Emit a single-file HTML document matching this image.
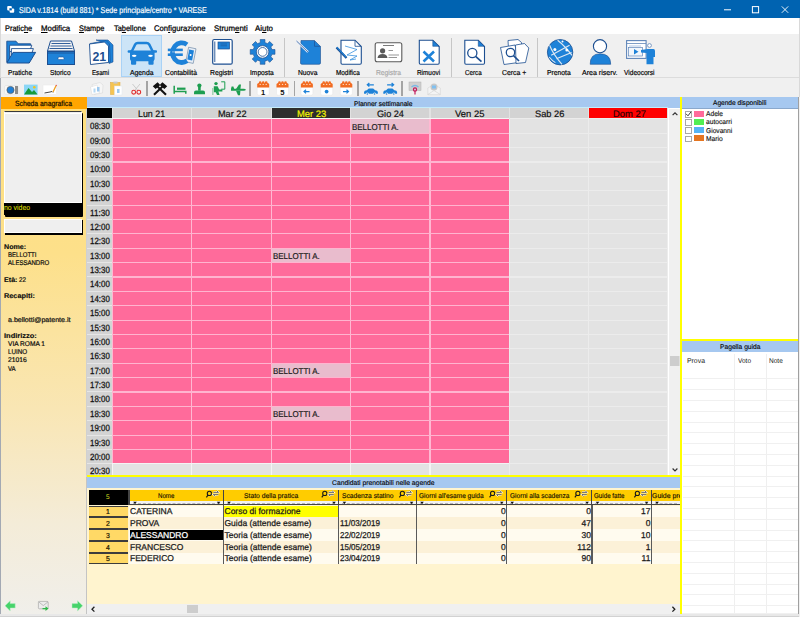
<!DOCTYPE html><html><head><meta charset="utf-8"><style>
html,body{margin:0;padding:0;width:800px;height:617px;overflow:hidden;background:#f0f0f0;font-family:"Liberation Sans", sans-serif;}
#root{position:relative;width:800px;height:617px;overflow:hidden;}
#root div{box-sizing:border-box;text-rendering:geometricPrecision;}
u{text-decoration:underline;text-underline-offset:1px;}
</style></head><body><div id="root">
<div style="position:absolute;left:0.00px;top:0.00px;width:800.00px;height:17.70px;background:#0063b1;"></div>
<div style="position:absolute;left:19.10px;top:6.00px;font-size:8.4px;line-height:1;color:#fff;white-space:nowrap;transform-origin:0 0;transform:scaleX(0.8524);-webkit-text-stroke:0.168px currentColor;">SIDA v.1814 (build 881) * Sede principale/centro * VARESE</div>
<svg style="position:absolute;left:0;top:0" width="800" height="18" viewBox="0 0 800 18"><rect x="7.2" y="6" width="4.6" height="4.4" rx="1" fill="#fff"/><rect x="9.6" y="8.4" width="4.6" height="4.4" rx="1" fill="#fff"/><rect x="9.4" y="8.2" width="2.4" height="2.2" fill="#0063b1"/><line x1="724" y1="9.8" x2="731" y2="9.8" stroke="#fff" stroke-width="1"/><rect x="752.4" y="6.6" width="6.2" height="6.2" fill="none" stroke="#fff" stroke-width="1"/><line x1="781.8" y1="6.4" x2="788.2" y2="12.8" stroke="#fff" stroke-width="0.9"/><line x1="788.2" y1="6.4" x2="781.8" y2="12.8" stroke="#fff" stroke-width="0.9"/></svg>
<div style="position:absolute;left:0.00px;top:17.70px;width:800.00px;height:16.20px;background:#fff;"></div>
<div style="position:absolute;left:5.00px;top:25.00px;font-size:8.1px;line-height:1;color:#000;white-space:nowrap;transform-origin:0 0;transform:scaleX(0.9156);-webkit-text-stroke:0.243px currentColor;">Pratic<u>h</u>e</div>
<div style="position:absolute;left:41.20px;top:25.00px;font-size:8.1px;line-height:1;color:#000;white-space:nowrap;transform-origin:0 0;transform:scaleX(0.9678);-webkit-text-stroke:0.243px currentColor;"><u>M</u>odifica</div>
<div style="position:absolute;left:79.40px;top:25.00px;font-size:8.1px;line-height:1;color:#000;white-space:nowrap;transform-origin:0 0;transform:scaleX(0.9132);-webkit-text-stroke:0.243px currentColor;"><u>S</u>tampe</div>
<div style="position:absolute;left:113.50px;top:25.00px;font-size:8.1px;line-height:1;color:#000;white-space:nowrap;transform-origin:0 0;transform:scaleX(0.9167);-webkit-text-stroke:0.243px currentColor;">Ta<u>b</u>ellone</div>
<div style="position:absolute;left:153.60px;top:25.00px;font-size:8.1px;line-height:1;color:#000;white-space:nowrap;transform-origin:0 0;transform:scaleX(0.9469);-webkit-text-stroke:0.243px currentColor;">Con<u>f</u>igurazione</div>
<div style="position:absolute;left:213.50px;top:25.00px;font-size:8.1px;line-height:1;color:#000;white-space:nowrap;transform-origin:0 0;transform:scaleX(0.9721);-webkit-text-stroke:0.243px currentColor;">Strum<u>e</u>nti</div>
<div style="position:absolute;left:255.40px;top:25.00px;font-size:8.1px;line-height:1;color:#000;white-space:nowrap;transform-origin:0 0;transform:scaleX(0.9747);-webkit-text-stroke:0.243px currentColor;">Ai<u>u</u>to</div>
<div style="position:absolute;left:0.00px;top:33.90px;width:800.00px;height:43.40px;background:#f0f0f0;"></div>
<div style="position:absolute;left:0.00px;top:77.00px;width:800.00px;height:1.20px;background:#dcdcdc;"></div>
<div style="position:absolute;left:121.00px;top:35.10px;width:41.00px;height:42.00px;background:#cce4f7;border:1px solid #a9d2f6;"></div>
<div style="position:absolute;left:7.75px;top:69.00px;font-size:7.2px;line-height:1;color:#000;white-space:nowrap;transform-origin:0 0;transform:scaleX(0.9146);-webkit-text-stroke:0.180px currentColor;">Pratiche</div>
<div style="position:absolute;left:50.00px;top:69.00px;font-size:7.2px;line-height:1;color:#000;white-space:nowrap;transform-origin:0 0;transform:scaleX(0.9192);-webkit-text-stroke:0.180px currentColor;">Storico</div>
<div style="position:absolute;left:91.90px;top:69.00px;font-size:7.2px;line-height:1;color:#000;white-space:nowrap;transform-origin:0 0;transform:scaleX(0.8551);-webkit-text-stroke:0.180px currentColor;">Esami</div>
<div style="position:absolute;left:130.00px;top:69.00px;font-size:7.2px;line-height:1;color:#000;white-space:nowrap;transform-origin:0 0;transform:scaleX(0.9461);-webkit-text-stroke:0.180px currentColor;">Agenda</div>
<div style="position:absolute;left:165.25px;top:69.00px;font-size:7.2px;line-height:1;color:#000;white-space:nowrap;transform-origin:0 0;transform:scaleX(0.9401);-webkit-text-stroke:0.180px currentColor;">Contabilità</div>
<div style="position:absolute;left:210.00px;top:69.00px;font-size:7.2px;line-height:1;color:#000;white-space:nowrap;transform-origin:0 0;transform:scaleX(0.9464);-webkit-text-stroke:0.180px currentColor;">Registri</div>
<div style="position:absolute;left:250.00px;top:69.00px;font-size:7.2px;line-height:1;color:#000;white-space:nowrap;transform-origin:0 0;transform:scaleX(0.9272);-webkit-text-stroke:0.180px currentColor;">Imposta</div>
<div style="position:absolute;left:297.50px;top:69.00px;font-size:7.2px;line-height:1;color:#000;white-space:nowrap;transform-origin:0 0;transform:scaleX(0.9315);-webkit-text-stroke:0.180px currentColor;">Nuova</div>
<div style="position:absolute;left:335.60px;top:69.00px;font-size:7.2px;line-height:1;color:#000;white-space:nowrap;transform-origin:0 0;transform:scaleX(0.8874);-webkit-text-stroke:0.180px currentColor;">Modifica</div>
<div style="position:absolute;left:376.25px;top:69.00px;font-size:7.2px;line-height:1;color:#a8a8a8;white-space:nowrap;transform-origin:0 0;transform:scaleX(0.9321);-webkit-text-stroke:0.180px currentColor;">Registra</div>
<div style="position:absolute;left:416.90px;top:69.00px;font-size:7.2px;line-height:1;color:#000;white-space:nowrap;transform-origin:0 0;transform:scaleX(0.8881);-webkit-text-stroke:0.180px currentColor;">Rimuovi</div>
<div style="position:absolute;left:465.00px;top:69.00px;font-size:7.2px;line-height:1;color:#000;white-space:nowrap;transform-origin:0 0;transform:scaleX(0.8739);-webkit-text-stroke:0.180px currentColor;">Cerca</div>
<div style="position:absolute;left:501.90px;top:69.00px;font-size:7.2px;line-height:1;color:#000;white-space:nowrap;transform-origin:0 0;transform:scaleX(0.9581);-webkit-text-stroke:0.180px currentColor;">Cerca +</div>
<div style="position:absolute;left:546.90px;top:69.00px;font-size:7.2px;line-height:1;color:#000;white-space:nowrap;transform-origin:0 0;transform:scaleX(0.9391);-webkit-text-stroke:0.180px currentColor;">Prenota</div>
<div style="position:absolute;left:581.90px;top:69.00px;font-size:7.2px;line-height:1;color:#000;white-space:nowrap;transform-origin:0 0;transform:scaleX(0.9815);-webkit-text-stroke:0.180px currentColor;">Area riserv.</div>
<div style="position:absolute;left:624.40px;top:69.00px;font-size:7.2px;line-height:1;color:#000;white-space:nowrap;transform-origin:0 0;transform:scaleX(0.9140);-webkit-text-stroke:0.180px currentColor;">Videocorsi</div>
<div style="position:absolute;left:284.40px;top:37.50px;width:1.00px;height:39.00px;background:#c6c6c6;"></div>
<div style="position:absolute;left:450.50px;top:37.50px;width:1.00px;height:39.00px;background:#c6c6c6;"></div>
<div style="position:absolute;left:536.60px;top:37.50px;width:1.00px;height:39.00px;background:#c6c6c6;"></div>
<div style="position:absolute;left:0.00px;top:78.20px;width:800.00px;height:18.30px;background:#f0f0f0;"></div>
<div style="position:absolute;left:146.30px;top:80.50px;width:1.50px;height:15.00px;background:#a4a4a4;"></div>
<div style="position:absolute;left:249.20px;top:80.50px;width:1.50px;height:15.00px;background:#a4a4a4;"></div>
<div style="position:absolute;left:293.55px;top:80.50px;width:1.50px;height:15.00px;background:#a4a4a4;"></div>
<div style="position:absolute;left:357.30px;top:80.50px;width:1.50px;height:15.00px;background:#a4a4a4;"></div>
<div style="position:absolute;left:401.05px;top:80.50px;width:1.50px;height:15.00px;background:#a4a4a4;"></div>
<svg style="position:absolute;left:0;top:0" width="800" height="100" viewBox="0 0 800 100"><path d="M6.8 41.2 H16 L18.2 43.8 H30.6 V47 H9.6 V62 H6.8 Z" fill="#1e82d8" stroke="#1d4f91" stroke-width="0.9"/>
<path d="M9.6 45.2 H31.8 L29.6 51.6 H9.6 Z" fill="#fff" stroke="#1d4f91" stroke-width="0.9"/>
<path d="M11.4 48.6 H33.4 L31.2 55 H11.4 Z" fill="#fff" stroke="#1d4f91" stroke-width="0.9"/>
<path d="M6.8 63 H29.2 L35.6 52.4 H13 Z" fill="#1e82d8" stroke="#1d4f91" stroke-width="1"/>
<path d="M50.5 41 H71.5 L74.5 51 H47.5 Z" fill="#f4f4f4" stroke="#1d4f91" stroke-width="1"/>
<line x1="51.5" y1="43.5" x2="70.5" y2="43.5" stroke="#1d4f91" stroke-width="0.9"/>
<line x1="50.5" y1="46" x2="71.5" y2="46" stroke="#1d4f91" stroke-width="0.9"/>
<line x1="49.5" y1="48.5" x2="72.5" y2="48.5" stroke="#1d4f91" stroke-width="0.9"/>
<rect x="47.5" y="51.5" width="27" height="13" fill="#1e82d8" stroke="#1d4f91" stroke-width="1"/>
<line x1="47.5" y1="53" x2="74.5" y2="53" stroke="#1d4f91" stroke-width="0.8"/>
<rect x="58" y="57" width="6" height="2.6" rx="1.2" fill="#fff" stroke="#1d4f91" stroke-width="0.6"/>
<path d="M96 40 H108 L113 45 V62 L109 63.5 V44 Z" fill="#1e82d8" stroke="#1d4f91" stroke-width="0.6"/>
<path d="M90 43.5 L106 40.5 L109.5 44 L110.5 62 L91.5 64 Z" fill="#1e82d8" stroke="#1d4f91" stroke-width="0.5"/>
<path d="M89.5 44 L104.5 42 L108.5 46 L108.5 62.5 L90.5 64.5 Z" fill="#fff" stroke="#1d4f91" stroke-width="0.9"/>
<text x="99.3" y="61" font-family="Liberation Sans" font-weight="bold" font-size="13" fill="#1d4f91" text-anchor="middle" transform="translate(99.3 0) scale(0.95 1) translate(-99.3 0)">21</text>
<path d="M131.8 51.2 L135.2 44.4 Q136.1 42.9 137.8 42.9 H146.6 Q148.3 42.9 149.2 44.4 L152.6 51.2" fill="none" stroke="#1e82d8" stroke-width="2.5"/>
<path d="M130 50.6 H154.6 V58.6 Q154.6 61.2 152 61.2 H132.6 Q130 61.2 130 58.6 Z" fill="#1e82d8"/>
<rect x="127.6" y="50.2" width="4.4" height="2.6" rx="1" fill="#1e82d8"/><rect x="152.6" y="50.2" width="4.4" height="2.6" rx="1" fill="#1e82d8"/>
<rect x="131" y="59.5" width="5.2" height="5.2" rx="1" fill="#1e82d8"/><rect x="148.4" y="59.5" width="5.2" height="5.2" rx="1" fill="#1e82d8"/>
<ellipse cx="134.2" cy="55.8" rx="2.3" ry="1.15" fill="#fff"/><ellipse cx="150.5" cy="55.8" rx="2.3" ry="1.15" fill="#fff"/>
<path d="M188.6 47.2 L196 48.8 L193.2 63.4 L185.8 61.8 Z" fill="#e8eef6" stroke="#6f8aa8" stroke-width="0.7"/>
<path d="M189.2 49.4 L194 50.4 L192.1 60.6 L187.3 59.6 Z" fill="#1e82d8"/>
<circle cx="190.6" cy="55" r="1" fill="#fff"/>
<path d="M187 44.6 A9.3 9.8 0 1 0 187 60.8" fill="none" stroke="#1e82d8" stroke-width="4.8"/>
<rect x="167.8" y="48.6" width="15" height="2.6" fill="#1e82d8"/><rect x="167.8" y="53.4" width="15" height="2.6" fill="#1e82d8"/>
<line x1="172" y1="51.9" x2="183" y2="51.9" stroke="#d8e6f4" stroke-width="0.6"/>
<rect x="212.7" y="39.5" width="19.5" height="24.7" rx="1.5" fill="#fff" stroke="#1d4f91" stroke-width="1.2"/>
<line x1="214.8" y1="41.5" x2="214.8" y2="62" stroke="#1d4f91" stroke-width="0.9"/>
<rect x="218" y="42" width="11.5" height="7" fill="#1e82d8" stroke="#1d4f91" stroke-width="0.7"/>
<line x1="220.5" y1="44" x2="227" y2="44" stroke="#1d4f91" stroke-width="0.6"/><line x1="220.5" y1="45.8" x2="227" y2="45.8" stroke="#1d4f91" stroke-width="0.6"/>
<polygon points="260.01,42.65 260.32,42.58 260.20,39.53 265.00,39.53 264.88,42.58 265.19,42.65 267.31,43.53 267.58,43.69 269.65,41.45 273.05,44.85 270.81,46.92 270.97,47.19 271.85,49.31 271.92,49.62 274.97,49.50 274.97,54.30 271.92,54.18 271.85,54.49 270.97,56.61 270.81,56.88 273.05,58.95 269.65,62.35 267.58,60.11 267.31,60.27 265.19,61.15 264.88,61.22 265.00,64.27 260.20,64.27 260.32,61.22 260.01,61.15 257.89,60.27 257.62,60.11 255.55,62.35 252.15,58.95 254.39,56.88 254.23,56.61 253.35,54.49 253.28,54.18 250.23,54.30 250.23,49.50 253.28,49.62 253.35,49.31 254.23,47.19 254.39,46.92 252.15,44.85 255.55,41.45 257.62,43.69 257.89,43.53" fill="#1e82d8" stroke="#1d4f91" stroke-width="0.6"/>
<circle cx="262.6" cy="51.9" r="6.3" fill="#fff" stroke="#1d4f91" stroke-width="0.8"/>
<circle cx="262.6" cy="51.9" r="4.4" fill="#fff" stroke="#1d4f91" stroke-width="0.8"/>
<path d="M301 40.5 H314.5 L320.5 46.5 V63 Q320.5 64.3 319 64.3 H302 Q300.5 64.3 300.5 63 Z" fill="#1e82d8" stroke="#1d4f91" stroke-width="0.6"/>
<path d="M314.5 40.8 V46.3 H320.3" fill="none" stroke="#1d4f91" stroke-width="0.7"/>
<line x1="296.5" y1="41" x2="308" y2="52" stroke="#e8eef8" stroke-width="2.4"/>
<line x1="296.5" y1="41" x2="308" y2="52" stroke="#1d4f91" stroke-width="0.7"/>
<path d="M341 40.2 H355 L361.3 46.5 V63 Q361.3 64.2 360 64.2 H342.3 Q341 64.2 341 63 Z" fill="#fff" stroke="#1d4f91" stroke-width="1.1"/>
<path d="M355 40.5 V46.3 H361" fill="none" stroke="#1d4f91" stroke-width="0.8"/>
<path d="M345 46 L357 49.5 L347 55 L357 56 L350 60 L356 59" fill="none" stroke="#1e82d8" stroke-width="0.7"/>
<line x1="336.5" y1="47.5" x2="346.5" y2="58" stroke="#1d4f91" stroke-width="2.3"/>
<line x1="336.8" y1="47.2" x2="346.3" y2="57.3" stroke="#1e82d8" stroke-width="1.1"/>
<rect x="375.2" y="42.8" width="26.6" height="18.9" rx="2" fill="#fff" stroke="#5a5a5a" stroke-width="1.1"/>
<line x1="383" y1="45.5" x2="394" y2="45.5" stroke="#5a5a5a" stroke-width="0.8"/>
<circle cx="382.6" cy="50.8" r="2.6" fill="#5a5a5a"/><path d="M377.5 58 Q378 54 382.6 54 Q387 54 387.5 58 Z" fill="#5a5a5a"/>
<line x1="388.5" y1="50.5" x2="393" y2="50.5" stroke="#6a6a6a" stroke-width="0.7"/><line x1="388.5" y1="55" x2="399" y2="55" stroke="#6a6a6a" stroke-width="0.7"/><line x1="388.5" y1="57.5" x2="397" y2="57.5" stroke="#6a6a6a" stroke-width="0.7"/>
<path d="M419.3 40.2 H432.8 L439.2 46.5 V63 Q439.2 64.2 438 64.2 H420.5 Q419.3 64.2 419.3 63 Z" fill="#fff" stroke="#1d4f91" stroke-width="1.1"/>
<path d="M432.8 40.5 L432.8 46.3 H439 Z" fill="#1e82d8" stroke="#1d4f91" stroke-width="0.6"/>
<path d="M423.5 51.5 L434 61.5 M434 51.5 L423.5 61.5" stroke="#1e82d8" stroke-width="2.6"/>
<path d="M464.8 40.2 H478.3 L484.5 46.5 V63 Q484.5 64.2 483.3 64.2 H466 Q464.8 64.2 464.8 63 Z" fill="#fff" stroke="#1d4f91" stroke-width="1.1"/>
<path d="M478.3 40.5 L478.3 46.3 H484.3 Z" fill="#1e82d8" stroke="#1d4f91" stroke-width="0.6"/>
<circle cx="472.3" cy="53" r="4.6" fill="#fff" stroke="#1d4f91" stroke-width="1.3"/>
<line x1="475.6" y1="56.4" x2="481.5" y2="61.7" stroke="#1d4f91" stroke-width="1.7"/>
<path d="M508 40.5 L518 39.5 L521.5 42.5 L522 56 L509 57.5 Z" fill="#fff" stroke="#1d4f91" stroke-width="0.8"/>
<path d="M500.5 47.5 L515 45 L518.5 62.5 L504 64.5 Z" fill="#fff" stroke="#1d4f91" stroke-width="0.8"/>
<path d="M515.5 45 L524.5 43.5 L528.8 48 L525.5 62.5 L516 63.5 Z" fill="#fff" stroke="#1d4f91" stroke-width="0.8"/>
<circle cx="510.5" cy="52.5" r="4.2" fill="#fff" stroke="#1d4f91" stroke-width="1.3"/>
<line x1="513.5" y1="55.6" x2="519" y2="61" stroke="#1d4f91" stroke-width="1.6"/>
<circle cx="560.1" cy="52.2" r="12.7" fill="#1e82d8" stroke="#1d4f91" stroke-width="0.8"/>
<path d="M549.6 45.2 Q553 54 562 64.4 M557.6 40.2 Q565 46 572 55.4 M569.6 45.2 L551.2 55.2 M571.6 52.4 L556.4 58.8 M549.2 57 Q552 60.6 555.4 62.6" fill="none" stroke="#dfe8f2" stroke-width="1.1"/>
<circle cx="554.9" cy="49.6" r="1.5" fill="#fff"/><circle cx="566.8" cy="50" r="1.5" fill="#fff"/><circle cx="562.5" cy="41.5" r="1" fill="#fff"/>
<circle cx="600" cy="46.2" r="6.6" fill="#fff" stroke="#1d4f91" stroke-width="1.1"/>
<path d="M590.2 64.3 Q590 53.8 600 53.8 Q610.7 53.8 610.7 64.3 Z" fill="#1e82d8" stroke="#1d4f91" stroke-width="0.6"/>
<rect x="626.6" y="40.6" width="19.5" height="17.8" fill="#fff" stroke="#5f85b8" stroke-width="1.1"/>
<line x1="626.6" y1="43.5" x2="646" y2="43.5" stroke="#5f85b8" stroke-width="0.8"/><line x1="629" y1="46" x2="641" y2="46" stroke="#8fb0d8" stroke-width="0.7"/>
<rect x="628.5" y="47.5" width="14" height="8.5" fill="#f2f6fb" stroke="#5f85b8" stroke-width="0.7"/>
<path d="M634 49 L638.5 51.7 L634 54.4 Z" fill="#1e82d8"/>
<circle cx="649.5" cy="45.5" r="1.9" fill="#fff" stroke="#5f85b8" stroke-width="0.8"/>
<path d="M641 50 L648 49 H653.5 Q655 49 655 51 V57 H653.5 V64.3 H646.5 V53 L641 52.5 Z" fill="#1e82d8"/><rect x="4.5" y="85.5" width="13.5" height="8.8" rx="1.5" fill="#f8f8f8" stroke="#dcdcdc" stroke-width="0.5"/>
<rect x="15" y="86" width="3" height="8" fill="#8c8c8c"/>
<circle cx="10.5" cy="90" r="3.6" fill="#1e7fd8" stroke="#5b5b5b" stroke-width="0.7"/>
<rect x="24" y="84.6" width="13.6" height="9.9" fill="#8ad6f6"/>
<path d="M24 94.5 L28.5 88 L32 92 L34 90 L37.6 94.5 Z" fill="#169a3a"/>
<circle cx="34.3" cy="87.3" r="1.3" fill="#f5c21a"/>
<rect x="43" y="85" width="13.5" height="9.5" fill="#fff" stroke="#e8e8e8" stroke-width="0.5"/>
<path d="M44.5 93 L50 92 L52 91.5 L53 92.5" fill="none" stroke="#333" stroke-width="0.9"/>
<line x1="53" y1="92" x2="56" y2="85.8" stroke="#f0a020" stroke-width="1.3"/><circle cx="56.2" cy="85.3" r="0.6" fill="#e02020"/>
<path d="M92 84.5 L100 82.5 L103 85 L102.5 93 L94 94.5 Z" fill="#f6f6f6" stroke="#d5d5d5" stroke-width="0.5"/>
<path d="M90.5 87 L97 85 L99.5 93 L92 94.5 Z" fill="#fff" stroke="#d8d8d8" stroke-width="0.5"/>
<rect x="97" y="87" width="2.5" height="4.5" fill="#9cc8ee"/><rect x="93.5" y="88.5" width="2" height="4" fill="#b6d8f2"/>
<rect x="110.5" y="82.5" width="9.5" height="12" fill="#f5c452" stroke="#e0a838" stroke-width="0.5"/>
<rect x="113.5" y="81.6" width="4" height="2" fill="#c9c9c9"/>
<rect x="114.5" y="86" width="7.5" height="9" fill="#fff" stroke="#dde6ee" stroke-width="0.5"/><rect x="117" y="89" width="2.5" height="4" fill="#9cc8ee"/>
<path d="M132.5 84 L137.5 90 M140 84 L135 90" stroke="#c0c0c0" stroke-width="0.8"/>
<circle cx="133.7" cy="92.2" r="1.9" fill="none" stroke="#e02b2b" stroke-width="1.1"/><circle cx="138.8" cy="92.2" r="1.9" fill="none" stroke="#e02b2b" stroke-width="1.1"/>
<path d="M157.5 86.5 L166 94.8 M162.5 86.5 L154 94.8" stroke="#111" stroke-width="2.1"/>
<path d="M152.8 86.2 L157.6 82.3 L160.3 85 L155.6 88.9 Z M167.2 86.2 L162.4 82.3 L159.7 85 L164.4 88.9 Z" fill="#111"/>
<path d="M174.2 85.8 V93.8 M174.2 91.6 H185.8 V93.8" fill="none" stroke="#1e9e50" stroke-width="1.5"/><rect x="177" y="87.6" width="8.5" height="2.2" fill="#1e9e50"/>
<circle cx="199.4" cy="85.6" r="2.1" fill="#1e9e50"/><rect x="198.1" y="86.5" width="2.6" height="4.2" fill="#1e9e50"/><path d="M194 94.2 V92.3 Q194 90.5 196 90.5 H203 Q205 90.5 205 92.3 V94.2 Z" fill="#1e9e50"/>
<circle cx="216" cy="83.6" r="1.7" fill="#1e9e50"/><path d="M213.8 86.3 H217.6 L219.2 89.6 H222.4 V91.6 H218.4 L219.6 95 H217 L215.8 92.2 H213.8 Z" fill="#1e9e50"/><path d="M221.2 81.8 H224.8 V89.2 H221.2" fill="none" stroke="#1e9e50" stroke-width="1"/><path d="M212.8 88 V95" stroke="#9ed0ae" stroke-width="1.4"/>
<path d="M231 88.8 H243.5 Q245.8 89 245.8 89.8 Q245.8 90.6 243.5 90.8 H231 Z" fill="#1e9e50"/>
<path d="M236 88.9 L239 84.4 H241 L240.4 88.9 Z M236 90.7 L238 95.2 H240 L240.4 90.7 Z M231 89 L231.6 86.6 H233.4 L234.2 89 Z" fill="#1e9e50"/>
<rect x="257.2" y="84" width="12" height="11.2" rx="1.6" fill="#fff" stroke="#e4e4e4" stroke-width="0.5"/><path d="M257.2 87.4 V84.6 Q257.2 83 258.79999999999995 83 H267.59999999999997 Q269.2 83 269.2 84.6 V87.4 Z" fill="#f26b21"/><circle cx="260.2" cy="82.6" r="1.3" fill="#f26b21"/><circle cx="260.2" cy="84.4" r="0.7" fill="#ffd9c0"/><circle cx="263.2" cy="82.6" r="1.3" fill="#f26b21"/><circle cx="263.2" cy="84.4" r="0.7" fill="#ffd9c0"/><circle cx="266.2" cy="82.6" r="1.3" fill="#f26b21"/><circle cx="266.2" cy="84.4" r="0.7" fill="#ffd9c0"/><text x="263.1" y="94.6" font-family="Liberation Sans" font-weight="bold" font-size="7.6" fill="#111" text-anchor="middle">1</text>
<rect x="276.5" y="84" width="12" height="11.2" rx="1.6" fill="#fff" stroke="#e4e4e4" stroke-width="0.5"/><path d="M276.5 87.4 V84.6 Q276.5 83 278.09999999999997 83 H286.9 Q288.5 83 288.5 84.6 V87.4 Z" fill="#f26b21"/><circle cx="279.5" cy="82.6" r="1.3" fill="#f26b21"/><circle cx="279.5" cy="84.4" r="0.7" fill="#ffd9c0"/><circle cx="282.5" cy="82.6" r="1.3" fill="#f26b21"/><circle cx="282.5" cy="84.4" r="0.7" fill="#ffd9c0"/><circle cx="285.5" cy="82.6" r="1.3" fill="#f26b21"/><circle cx="285.5" cy="84.4" r="0.7" fill="#ffd9c0"/><text x="282.4" y="94.6" font-family="Liberation Sans" font-weight="bold" font-size="7.6" fill="#111" text-anchor="middle">5</text>
<rect x="300.90000000000003" y="84" width="12" height="11.2" rx="1.6" fill="#fff" stroke="#e4e4e4" stroke-width="0.5"/><path d="M300.90000000000003 87.4 V84.6 Q300.90000000000003 83 302.5 83 H311.3 Q312.90000000000003 83 312.90000000000003 84.6 V87.4 Z" fill="#f26b21"/><circle cx="303.90000000000003" cy="82.6" r="1.3" fill="#f26b21"/><circle cx="303.90000000000003" cy="84.4" r="0.7" fill="#ffd9c0"/><circle cx="306.90000000000003" cy="82.6" r="1.3" fill="#f26b21"/><circle cx="306.90000000000003" cy="84.4" r="0.7" fill="#ffd9c0"/><circle cx="309.90000000000003" cy="82.6" r="1.3" fill="#f26b21"/><circle cx="309.90000000000003" cy="84.4" r="0.7" fill="#ffd9c0"/><path d="M309.5 91.6 H304 M306 89.8 L304 91.6 L306 93.4" fill="none" stroke="#1e82d8" stroke-width="1.2"/>
<rect x="320.7" y="84" width="12" height="11.2" rx="1.6" fill="#fff" stroke="#e4e4e4" stroke-width="0.5"/><path d="M320.7 87.4 V84.6 Q320.7 83 322.29999999999995 83 H331.09999999999997 Q332.7 83 332.7 84.6 V87.4 Z" fill="#f26b21"/><circle cx="323.7" cy="82.6" r="1.3" fill="#f26b21"/><circle cx="323.7" cy="84.4" r="0.7" fill="#ffd9c0"/><circle cx="326.7" cy="82.6" r="1.3" fill="#f26b21"/><circle cx="326.7" cy="84.4" r="0.7" fill="#ffd9c0"/><circle cx="329.7" cy="82.6" r="1.3" fill="#f26b21"/><circle cx="329.7" cy="84.4" r="0.7" fill="#ffd9c0"/><circle cx="326.6" cy="91.6" r="1.9" fill="#1e82d8"/>
<rect x="340.3" y="84" width="12" height="11.2" rx="1.6" fill="#fff" stroke="#e4e4e4" stroke-width="0.5"/><path d="M340.3 87.4 V84.6 Q340.3 83 341.9 83 H350.7 Q352.3 83 352.3 84.6 V87.4 Z" fill="#f26b21"/><circle cx="343.3" cy="82.6" r="1.3" fill="#f26b21"/><circle cx="343.3" cy="84.4" r="0.7" fill="#ffd9c0"/><circle cx="346.3" cy="82.6" r="1.3" fill="#f26b21"/><circle cx="346.3" cy="84.4" r="0.7" fill="#ffd9c0"/><circle cx="349.3" cy="82.6" r="1.3" fill="#f26b21"/><circle cx="349.3" cy="84.4" r="0.7" fill="#ffd9c0"/><path d="M343 91.6 H348.5 M346.5 89.8 L348.5 91.6 L346.5 93.4" fill="none" stroke="#1e82d8" stroke-width="1.2"/>
<path d="M373.85 84.8 H367.35 M369.35 83 L367.35 84.8 L369.35 86.6" fill="none" stroke="#1e82d8" stroke-width="1.3"/>
<path d="M364.05 93.8 V92 Q364.25 90.6 366.75 90.3 L368.75 88.6 H373.15 L375.15 90.3 Q377.65 90.6 377.85 92 V93.8 Z" fill="#1e82d8"/>
<circle cx="367.35" cy="94" r="1.5" fill="#f0f0f0"/><circle cx="374.55" cy="94" r="1.5" fill="#f0f0f0"/><circle cx="367.35" cy="94" r="0.8" fill="#1e82d8"/><circle cx="374.55" cy="94" r="0.8" fill="#1e82d8"/>
<path d="M387.1 84.8 H393.6 M391.6 83 L393.6 84.8 L391.6 86.6" fill="none" stroke="#1e82d8" stroke-width="1.3"/>
<path d="M383.3 93.8 V92 Q383.5 90.6 386 90.3 L388 88.6 H392.4 L394.4 90.3 Q396.9 90.6 397.1 92 V93.8 Z" fill="#1e82d8"/>
<circle cx="386.6" cy="94" r="1.5" fill="#f0f0f0"/><circle cx="393.8" cy="94" r="1.5" fill="#f0f0f0"/><circle cx="386.6" cy="94" r="0.8" fill="#1e82d8"/><circle cx="393.8" cy="94" r="0.8" fill="#1e82d8"/>
<rect x="409" y="82" width="12" height="8.5" fill="#cfcfcf" stroke="#b0b0b0" stroke-width="0.5"/><path d="M411.5 87 Q415 84 418.5 87" fill="none" stroke="#7ab8e6" stroke-width="1.3"/>
<circle cx="415" cy="89.5" r="1.6" fill="none" stroke="#c2185b" stroke-width="1.2"/><line x1="415" y1="91" x2="415" y2="94.5" stroke="#c2185b" stroke-width="1.2"/>
<path d="M427.8 88 L434 84.5 L440.3 88 V94.7 H427.8 Z" fill="#f4f4f4" stroke="#cfcfcf" stroke-width="0.5"/>
<circle cx="434" cy="87" r="3.5" fill="#c8c8c8"/><rect x="432" y="85.5" width="4" height="3" fill="#80c0f0"/>
<path d="M427.8 94.5 L434 90.5 L440.3 94.5" fill="none" stroke="#d0d0d0" stroke-width="0.6"/></svg>
<div style="position:absolute;left:0.00px;top:17.70px;width:1.00px;height:60.50px;background:#d9d9d9;"></div>
<div style="position:absolute;left:0.00px;top:78.20px;width:1.30px;height:18.50px;background:#a3a9b3;"></div>
<div style="position:absolute;left:799.00px;top:17.70px;width:1.00px;height:79.50px;background:#d9d9d9;"></div>
<div style="position:absolute;left:0.00px;top:96.50px;width:87.00px;height:520.50px;background:linear-gradient(to bottom,#ffe07e 0%,#fde08a 30%,#f9e6b4 60%,#f4ecd8 82%,#f0efeb 100%);"></div>
<div style="position:absolute;left:0.00px;top:96.50px;width:1.30px;height:520.50px;background:#a3a9b3;"></div>
<div style="position:absolute;left:85.80px;top:96.50px;width:1.20px;height:520.50px;background:#d0d0d0;"></div>
<div style="position:absolute;left:1.30px;top:97.10px;width:85.90px;height:11.70px;background:#ffa500;"></div>
<div style="position:absolute;left:14.50px;top:100.00px;font-size:7.6px;line-height:1;color:#1a1200;white-space:nowrap;transform-origin:0 0;transform:scaleX(0.8993);-webkit-text-stroke:0.228px currentColor;">Scheda anagrafica</div>
<div style="position:absolute;left:5.20px;top:113.00px;width:78.00px;height:103.50px;background:#000;border-radius:1px;"></div>
<div style="position:absolute;left:3.60px;top:111.00px;width:78.00px;height:92.10px;background:#efefef;border:1.2px solid #fff;border-top:1.6px solid #3a3a3a;"></div>
<div style="position:absolute;left:4.80px;top:112.60px;width:76.20px;height:1.00px;background:#fff;"></div>
<div style="position:absolute;left:3.60px;top:203.10px;width:78.50px;height:12.20px;background:#000;"></div>
<div style="position:absolute;left:3.90px;top:204.00px;font-size:7.6px;line-height:1;color:#e8e800;white-space:nowrap;transform-origin:0 0;transform:scaleX(0.9085);-webkit-text-stroke:0.000px currentColor;">no video</div>
<div style="position:absolute;left:5.20px;top:220.00px;width:78.00px;height:14.60px;background:#000;"></div>
<div style="position:absolute;left:3.60px;top:218.50px;width:78.00px;height:14.60px;background:#efefef;border:1.2px solid #fff;"></div>
<div style="position:absolute;left:4.10px;top:245.00px;font-size:6.9px;line-height:1;color:#0c0c0c;white-space:nowrap;transform-origin:0 0;transform:scaleX(1.0337);-webkit-text-stroke:0.138px currentColor;font-weight:bold;">Nome:</div>
<div style="position:absolute;left:7.90px;top:253.00px;font-size:6.8px;line-height:1;color:#0c0c0c;white-space:nowrap;transform-origin:0 0;transform:scaleX(0.8870);-webkit-text-stroke:0.204px currentColor;">BELLOTTI</div>
<div style="position:absolute;left:7.50px;top:261.00px;font-size:6.8px;line-height:1;color:#0c0c0c;white-space:nowrap;transform-origin:0 0;transform:scaleX(0.8886);-webkit-text-stroke:0.204px currentColor;">ALESSANDRO</div>
<div style="position:absolute;left:4.00px;top:278.00px;font-size:6.9px;line-height:1;color:#0c0c0c;white-space:nowrap;transform-origin:0 0;transform:scaleX(1.0352);-webkit-text-stroke:0.138px currentColor;font-weight:bold;">Età:</div>
<div style="position:absolute;left:19.00px;top:278.00px;font-size:6.8px;line-height:1;color:#0c0c0c;white-space:nowrap;transform-origin:0 0;transform:scaleX(0.9253);-webkit-text-stroke:0.204px currentColor;">22</div>
<div style="position:absolute;left:4.00px;top:294.00px;font-size:6.9px;line-height:1;color:#0c0c0c;white-space:nowrap;transform-origin:0 0;transform:scaleX(1.0640);-webkit-text-stroke:0.138px currentColor;font-weight:bold;">Recapiti:</div>
<div style="position:absolute;left:8.00px;top:318.00px;font-size:6.8px;line-height:1;color:#0c0c0c;white-space:nowrap;transform-origin:0 0;transform:scaleX(1.0380);-webkit-text-stroke:0.204px currentColor;">a.bellotti@patente.it</div>
<div style="position:absolute;left:4.00px;top:334.00px;font-size:6.9px;line-height:1;color:#0c0c0c;white-space:nowrap;transform-origin:0 0;transform:scaleX(1.0868);-webkit-text-stroke:0.138px currentColor;font-weight:bold;">Indirizzo:</div>
<div style="position:absolute;left:7.70px;top:342.00px;font-size:6.8px;line-height:1;color:#0c0c0c;white-space:nowrap;transform-origin:0 0;transform:scaleX(0.9669);-webkit-text-stroke:0.204px currentColor;">VIA ROMA 1</div>
<div style="position:absolute;left:7.70px;top:350.00px;font-size:6.8px;line-height:1;color:#0c0c0c;white-space:nowrap;transform-origin:0 0;transform:scaleX(0.9187);-webkit-text-stroke:0.204px currentColor;">LUINO</div>
<div style="position:absolute;left:7.70px;top:358.00px;font-size:6.8px;line-height:1;color:#0c0c0c;white-space:nowrap;transform-origin:0 0;transform:scaleX(0.9892);-webkit-text-stroke:0.204px currentColor;">21016</div>
<div style="position:absolute;left:7.70px;top:367.00px;font-size:6.8px;line-height:1;color:#0c0c0c;white-space:nowrap;transform-origin:0 0;transform:scaleX(0.8987);-webkit-text-stroke:0.204px currentColor;">VA</div>
<svg style="position:absolute;left:0;top:596" width="90" height="20" viewBox="0 596 90 20"><path d="M5 605.8 L10.2 600.7 V603.6 H15.2 V608 H10.2 V610.9 Z" fill="#46d36a" stroke="#b8efc6" stroke-width="0.5"/><path d="M82.7 605.8 L77.5 600.7 V603.6 H72 V608 H77.5 V610.9 Z" fill="#46d36a" stroke="#b8efc6" stroke-width="0.5"/><rect x="38.4" y="601.4" width="9.8" height="7.4" rx="1" fill="#ececec" stroke="#9a9a9a" stroke-width="0.6"/><path d="M38.6 601.8 L43.3 605.6 L48 601.8" fill="none" stroke="#9a9a9a" stroke-width="0.6"/><path d="M42.5 608 H45.5 V606.3 L48.6 608.6 L45.5 610.9 V609.3 H42.5 Z" fill="#2fb84a"/></svg>
<div style="position:absolute;left:87.00px;top:97.00px;width:593.00px;height:11.20px;background:#a6c8f0;"></div>
<div style="position:absolute;left:353.80px;top:102.00px;font-size:6.8px;line-height:1;color:#000;white-space:nowrap;transform-origin:0 0;transform:scaleX(0.9735);-webkit-text-stroke:0.136px currentColor;">Planner settimanale</div>
<div style="position:absolute;left:87.00px;top:107.30px;width:581.00px;height:0.90px;background:#c4ecfb;"></div>
<div style="position:absolute;left:87.00px;top:108.10px;width:581.00px;height:11.00px;background:#e2e2e2;"></div>
<div style="position:absolute;left:87.00px;top:108.10px;width:25.30px;height:10.20px;background:#000;"></div>
<div style="position:absolute;left:112.95px;top:108.20px;width:78.30px;height:10.30px;background:#d3d3d3;"></div>
<div style="position:absolute;left:138.00px;top:109.00px;font-size:9.4px;line-height:1;color:#101010;white-space:nowrap;transform-origin:0 0;transform:scaleX(0.9464);-webkit-text-stroke:0.188px currentColor;">Lun 21</div>
<div style="position:absolute;left:192.35px;top:108.20px;width:78.30px;height:10.30px;background:#d3d3d3;"></div>
<div style="position:absolute;left:217.70px;top:109.00px;font-size:9.4px;line-height:1;color:#101010;white-space:nowrap;transform-origin:0 0;transform:scaleX(0.9758);-webkit-text-stroke:0.188px currentColor;">Mar 22</div>
<div style="position:absolute;left:271.75px;top:108.20px;width:78.20px;height:10.30px;background:#2e2e2e;"></div>
<div style="position:absolute;left:296.60px;top:109.00px;font-size:9.4px;line-height:1;color:#f5f500;white-space:nowrap;transform-origin:0 0;transform:scaleX(1.0015);-webkit-text-stroke:0.188px currentColor;">Mer 23</div>
<div style="position:absolute;left:351.05px;top:108.20px;width:78.40px;height:10.30px;background:#d3d3d3;"></div>
<div style="position:absolute;left:376.80px;top:109.00px;font-size:9.4px;line-height:1;color:#101010;white-space:nowrap;transform-origin:0 0;transform:scaleX(0.9745);-webkit-text-stroke:0.188px currentColor;">Gio 24</div>
<div style="position:absolute;left:430.55px;top:108.20px;width:78.40px;height:10.30px;background:#d3d3d3;"></div>
<div style="position:absolute;left:455.10px;top:109.00px;font-size:9.4px;line-height:1;color:#101010;white-space:nowrap;transform-origin:0 0;transform:scaleX(1.0075);-webkit-text-stroke:0.188px currentColor;">Ven 25</div>
<div style="position:absolute;left:510.05px;top:108.20px;width:77.60px;height:10.30px;background:#d3d3d3;"></div>
<div style="position:absolute;left:534.90px;top:109.00px;font-size:9.4px;line-height:1;color:#101010;white-space:nowrap;transform-origin:0 0;transform:scaleX(0.9866);-webkit-text-stroke:0.188px currentColor;">Sab 26</div>
<div style="position:absolute;left:588.75px;top:108.20px;width:78.70px;height:10.30px;background:#ff0000;"></div>
<div style="position:absolute;left:612.70px;top:109.00px;font-size:9.4px;line-height:1;color:#2a0000;white-space:nowrap;transform-origin:0 0;transform:scaleX(1.0023);-webkit-text-stroke:0.188px currentColor;">Dom 27</div>
<div style="position:absolute;left:87.00px;top:118.85px;width:25.40px;height:356.15px;background:#d3d3d3;"></div>
<div style="position:absolute;left:112.40px;top:118.85px;width:555.60px;height:356.15px;background:#e3e3e3;"></div>
<div style="position:absolute;left:112.40px;top:118.85px;width:397.10px;height:345.00px;background:#ff6b9b;"></div>
<div style="position:absolute;left:89.50px;top:122.00px;font-size:9.0px;line-height:1;color:#141414;white-space:nowrap;transform-origin:0 0;transform:scaleX(0.8791);-webkit-text-stroke:0.270px currentColor;">08:30</div>
<div style="position:absolute;left:87.00px;top:132.62px;width:25.40px;height:1.10px;background:#e6e6e6;"></div>
<div style="position:absolute;left:89.50px;top:137.00px;font-size:9.0px;line-height:1;color:#141414;white-space:nowrap;transform-origin:0 0;transform:scaleX(0.8791);-webkit-text-stroke:0.270px currentColor;">09:00</div>
<div style="position:absolute;left:87.00px;top:147.00px;width:25.40px;height:1.10px;background:#e6e6e6;"></div>
<div style="position:absolute;left:89.50px;top:151.00px;font-size:9.0px;line-height:1;color:#141414;white-space:nowrap;transform-origin:0 0;transform:scaleX(0.8791);-webkit-text-stroke:0.270px currentColor;">09:30</div>
<div style="position:absolute;left:87.00px;top:161.38px;width:25.40px;height:1.10px;background:#e6e6e6;"></div>
<div style="position:absolute;left:89.50px;top:165.00px;font-size:9.0px;line-height:1;color:#141414;white-space:nowrap;transform-origin:0 0;transform:scaleX(0.8791);-webkit-text-stroke:0.270px currentColor;">10:00</div>
<div style="position:absolute;left:87.00px;top:175.75px;width:25.40px;height:1.10px;background:#e6e6e6;"></div>
<div style="position:absolute;left:89.50px;top:180.00px;font-size:9.0px;line-height:1;color:#141414;white-space:nowrap;transform-origin:0 0;transform:scaleX(0.8791);-webkit-text-stroke:0.270px currentColor;">10:30</div>
<div style="position:absolute;left:87.00px;top:190.12px;width:25.40px;height:1.10px;background:#e6e6e6;"></div>
<div style="position:absolute;left:89.50px;top:194.00px;font-size:9.0px;line-height:1;color:#141414;white-space:nowrap;transform-origin:0 0;transform:scaleX(0.9063);-webkit-text-stroke:0.270px currentColor;">11:00</div>
<div style="position:absolute;left:87.00px;top:204.50px;width:25.40px;height:1.10px;background:#e6e6e6;"></div>
<div style="position:absolute;left:89.50px;top:209.00px;font-size:9.0px;line-height:1;color:#141414;white-space:nowrap;transform-origin:0 0;transform:scaleX(0.9063);-webkit-text-stroke:0.270px currentColor;">11:30</div>
<div style="position:absolute;left:87.00px;top:218.88px;width:25.40px;height:1.10px;background:#e6e6e6;"></div>
<div style="position:absolute;left:89.50px;top:223.00px;font-size:9.0px;line-height:1;color:#141414;white-space:nowrap;transform-origin:0 0;transform:scaleX(0.8791);-webkit-text-stroke:0.270px currentColor;">12:00</div>
<div style="position:absolute;left:87.00px;top:233.25px;width:25.40px;height:1.10px;background:#e6e6e6;"></div>
<div style="position:absolute;left:89.50px;top:237.00px;font-size:9.0px;line-height:1;color:#141414;white-space:nowrap;transform-origin:0 0;transform:scaleX(0.8791);-webkit-text-stroke:0.270px currentColor;">12:30</div>
<div style="position:absolute;left:87.00px;top:247.62px;width:25.40px;height:1.10px;background:#e6e6e6;"></div>
<div style="position:absolute;left:89.50px;top:252.00px;font-size:9.0px;line-height:1;color:#141414;white-space:nowrap;transform-origin:0 0;transform:scaleX(0.8791);-webkit-text-stroke:0.270px currentColor;">13:00</div>
<div style="position:absolute;left:87.00px;top:262.00px;width:25.40px;height:1.10px;background:#e6e6e6;"></div>
<div style="position:absolute;left:89.50px;top:266.00px;font-size:9.0px;line-height:1;color:#141414;white-space:nowrap;transform-origin:0 0;transform:scaleX(0.8791);-webkit-text-stroke:0.270px currentColor;">13:30</div>
<div style="position:absolute;left:87.00px;top:276.38px;width:25.40px;height:1.10px;background:#e6e6e6;"></div>
<div style="position:absolute;left:89.50px;top:280.00px;font-size:9.0px;line-height:1;color:#141414;white-space:nowrap;transform-origin:0 0;transform:scaleX(0.8791);-webkit-text-stroke:0.270px currentColor;">14:00</div>
<div style="position:absolute;left:87.00px;top:290.75px;width:25.40px;height:1.10px;background:#e6e6e6;"></div>
<div style="position:absolute;left:89.50px;top:295.00px;font-size:9.0px;line-height:1;color:#141414;white-space:nowrap;transform-origin:0 0;transform:scaleX(0.8791);-webkit-text-stroke:0.270px currentColor;">14:30</div>
<div style="position:absolute;left:87.00px;top:305.12px;width:25.40px;height:1.10px;background:#e6e6e6;"></div>
<div style="position:absolute;left:89.50px;top:309.00px;font-size:9.0px;line-height:1;color:#141414;white-space:nowrap;transform-origin:0 0;transform:scaleX(0.8791);-webkit-text-stroke:0.270px currentColor;">15:00</div>
<div style="position:absolute;left:87.00px;top:319.50px;width:25.40px;height:1.10px;background:#e6e6e6;"></div>
<div style="position:absolute;left:89.50px;top:324.00px;font-size:9.0px;line-height:1;color:#141414;white-space:nowrap;transform-origin:0 0;transform:scaleX(0.8791);-webkit-text-stroke:0.270px currentColor;">15:30</div>
<div style="position:absolute;left:87.00px;top:333.88px;width:25.40px;height:1.10px;background:#e6e6e6;"></div>
<div style="position:absolute;left:89.50px;top:338.00px;font-size:9.0px;line-height:1;color:#141414;white-space:nowrap;transform-origin:0 0;transform:scaleX(0.8791);-webkit-text-stroke:0.270px currentColor;">16:00</div>
<div style="position:absolute;left:87.00px;top:348.25px;width:25.40px;height:1.10px;background:#e6e6e6;"></div>
<div style="position:absolute;left:89.50px;top:352.00px;font-size:9.0px;line-height:1;color:#141414;white-space:nowrap;transform-origin:0 0;transform:scaleX(0.8791);-webkit-text-stroke:0.270px currentColor;">16:30</div>
<div style="position:absolute;left:87.00px;top:362.62px;width:25.40px;height:1.10px;background:#e6e6e6;"></div>
<div style="position:absolute;left:89.50px;top:367.00px;font-size:9.0px;line-height:1;color:#141414;white-space:nowrap;transform-origin:0 0;transform:scaleX(0.8791);-webkit-text-stroke:0.270px currentColor;">17:00</div>
<div style="position:absolute;left:87.00px;top:377.00px;width:25.40px;height:1.10px;background:#e6e6e6;"></div>
<div style="position:absolute;left:89.50px;top:381.00px;font-size:9.0px;line-height:1;color:#141414;white-space:nowrap;transform-origin:0 0;transform:scaleX(0.8791);-webkit-text-stroke:0.270px currentColor;">17:30</div>
<div style="position:absolute;left:87.00px;top:391.38px;width:25.40px;height:1.10px;background:#e6e6e6;"></div>
<div style="position:absolute;left:89.50px;top:395.00px;font-size:9.0px;line-height:1;color:#141414;white-space:nowrap;transform-origin:0 0;transform:scaleX(0.8791);-webkit-text-stroke:0.270px currentColor;">18:00</div>
<div style="position:absolute;left:87.00px;top:405.75px;width:25.40px;height:1.10px;background:#e6e6e6;"></div>
<div style="position:absolute;left:89.50px;top:410.00px;font-size:9.0px;line-height:1;color:#141414;white-space:nowrap;transform-origin:0 0;transform:scaleX(0.8791);-webkit-text-stroke:0.270px currentColor;">18:30</div>
<div style="position:absolute;left:87.00px;top:420.12px;width:25.40px;height:1.10px;background:#e6e6e6;"></div>
<div style="position:absolute;left:89.50px;top:424.00px;font-size:9.0px;line-height:1;color:#141414;white-space:nowrap;transform-origin:0 0;transform:scaleX(0.8791);-webkit-text-stroke:0.270px currentColor;">19:00</div>
<div style="position:absolute;left:87.00px;top:434.50px;width:25.40px;height:1.10px;background:#e6e6e6;"></div>
<div style="position:absolute;left:89.50px;top:439.00px;font-size:9.0px;line-height:1;color:#141414;white-space:nowrap;transform-origin:0 0;transform:scaleX(0.8791);-webkit-text-stroke:0.270px currentColor;">19:30</div>
<div style="position:absolute;left:87.00px;top:448.88px;width:25.40px;height:1.10px;background:#e6e6e6;"></div>
<div style="position:absolute;left:89.50px;top:453.00px;font-size:9.0px;line-height:1;color:#141414;white-space:nowrap;transform-origin:0 0;transform:scaleX(0.8791);-webkit-text-stroke:0.270px currentColor;">20:00</div>
<div style="position:absolute;left:87.00px;top:463.25px;width:25.40px;height:1.10px;background:#e6e6e6;"></div>
<div style="position:absolute;left:89.50px;top:467.00px;font-size:9.0px;line-height:1;color:#141414;white-space:nowrap;transform-origin:0 0;transform:scaleX(0.8791);-webkit-text-stroke:0.270px currentColor;">20:30</div>
<div style="position:absolute;left:111.85px;top:118.85px;width:1.10px;height:345.00px;background:#ffb8d2;"></div>
<div style="position:absolute;left:111.85px;top:463.85px;width:1.10px;height:11.15px;background:#f4f4f4;"></div>
<div style="position:absolute;left:191.25px;top:118.85px;width:1.10px;height:345.00px;background:#ffb8d2;"></div>
<div style="position:absolute;left:191.25px;top:463.85px;width:1.10px;height:11.15px;background:#f4f4f4;"></div>
<div style="position:absolute;left:270.65px;top:118.85px;width:1.10px;height:345.00px;background:#ffb8d2;"></div>
<div style="position:absolute;left:270.65px;top:463.85px;width:1.10px;height:11.15px;background:#f4f4f4;"></div>
<div style="position:absolute;left:349.95px;top:118.85px;width:1.10px;height:345.00px;background:#ffb8d2;"></div>
<div style="position:absolute;left:349.95px;top:463.85px;width:1.10px;height:11.15px;background:#f4f4f4;"></div>
<div style="position:absolute;left:429.45px;top:118.85px;width:1.10px;height:345.00px;background:#ffb8d2;"></div>
<div style="position:absolute;left:429.45px;top:463.85px;width:1.10px;height:11.15px;background:#f4f4f4;"></div>
<div style="position:absolute;left:508.95px;top:118.85px;width:1.10px;height:356.15px;background:#ececec;"></div>
<div style="position:absolute;left:587.65px;top:118.85px;width:1.10px;height:356.15px;background:#ececec;"></div>
<div style="position:absolute;left:667.45px;top:118.85px;width:1.10px;height:356.15px;background:#ececec;"></div>
<div style="position:absolute;left:112.40px;top:118.35px;width:397.10px;height:1.10px;background:#f4f4f4;"></div>
<div style="position:absolute;left:509.50px;top:118.35px;width:158.50px;height:1.10px;background:#ececec;"></div>
<div style="position:absolute;left:112.40px;top:132.72px;width:397.10px;height:1.10px;background:#ffb4cf;"></div>
<div style="position:absolute;left:509.50px;top:132.72px;width:158.50px;height:1.10px;background:#ececec;"></div>
<div style="position:absolute;left:112.40px;top:147.10px;width:397.10px;height:1.10px;background:#ffb4cf;"></div>
<div style="position:absolute;left:509.50px;top:147.10px;width:158.50px;height:1.10px;background:#ececec;"></div>
<div style="position:absolute;left:112.40px;top:161.47px;width:397.10px;height:1.10px;background:#ffb4cf;"></div>
<div style="position:absolute;left:509.50px;top:161.47px;width:158.50px;height:1.10px;background:#ececec;"></div>
<div style="position:absolute;left:112.40px;top:175.85px;width:397.10px;height:1.10px;background:#ffb4cf;"></div>
<div style="position:absolute;left:509.50px;top:175.85px;width:158.50px;height:1.10px;background:#ececec;"></div>
<div style="position:absolute;left:112.40px;top:190.22px;width:397.10px;height:1.10px;background:#ffb4cf;"></div>
<div style="position:absolute;left:509.50px;top:190.22px;width:158.50px;height:1.10px;background:#ececec;"></div>
<div style="position:absolute;left:112.40px;top:204.60px;width:397.10px;height:1.10px;background:#ffb4cf;"></div>
<div style="position:absolute;left:509.50px;top:204.60px;width:158.50px;height:1.10px;background:#ececec;"></div>
<div style="position:absolute;left:112.40px;top:218.97px;width:397.10px;height:1.10px;background:#ffb4cf;"></div>
<div style="position:absolute;left:509.50px;top:218.97px;width:158.50px;height:1.10px;background:#ececec;"></div>
<div style="position:absolute;left:112.40px;top:233.35px;width:397.10px;height:1.10px;background:#ffb4cf;"></div>
<div style="position:absolute;left:509.50px;top:233.35px;width:158.50px;height:1.10px;background:#ececec;"></div>
<div style="position:absolute;left:112.40px;top:247.72px;width:397.10px;height:1.10px;background:#ffb4cf;"></div>
<div style="position:absolute;left:509.50px;top:247.72px;width:158.50px;height:1.10px;background:#ececec;"></div>
<div style="position:absolute;left:112.40px;top:262.10px;width:397.10px;height:1.10px;background:#ffb4cf;"></div>
<div style="position:absolute;left:509.50px;top:262.10px;width:158.50px;height:1.10px;background:#ececec;"></div>
<div style="position:absolute;left:112.40px;top:276.48px;width:397.10px;height:1.10px;background:#ffb4cf;"></div>
<div style="position:absolute;left:509.50px;top:276.48px;width:158.50px;height:1.10px;background:#ececec;"></div>
<div style="position:absolute;left:112.40px;top:290.85px;width:397.10px;height:1.10px;background:#ffb4cf;"></div>
<div style="position:absolute;left:509.50px;top:290.85px;width:158.50px;height:1.10px;background:#ececec;"></div>
<div style="position:absolute;left:112.40px;top:305.23px;width:397.10px;height:1.10px;background:#ffb4cf;"></div>
<div style="position:absolute;left:509.50px;top:305.23px;width:158.50px;height:1.10px;background:#ececec;"></div>
<div style="position:absolute;left:112.40px;top:319.60px;width:397.10px;height:1.10px;background:#ffb4cf;"></div>
<div style="position:absolute;left:509.50px;top:319.60px;width:158.50px;height:1.10px;background:#ececec;"></div>
<div style="position:absolute;left:112.40px;top:333.98px;width:397.10px;height:1.10px;background:#ffb4cf;"></div>
<div style="position:absolute;left:509.50px;top:333.98px;width:158.50px;height:1.10px;background:#ececec;"></div>
<div style="position:absolute;left:112.40px;top:348.35px;width:397.10px;height:1.10px;background:#ffb4cf;"></div>
<div style="position:absolute;left:509.50px;top:348.35px;width:158.50px;height:1.10px;background:#ececec;"></div>
<div style="position:absolute;left:112.40px;top:362.73px;width:397.10px;height:1.10px;background:#ffb4cf;"></div>
<div style="position:absolute;left:509.50px;top:362.73px;width:158.50px;height:1.10px;background:#ececec;"></div>
<div style="position:absolute;left:112.40px;top:377.10px;width:397.10px;height:1.10px;background:#ffb4cf;"></div>
<div style="position:absolute;left:509.50px;top:377.10px;width:158.50px;height:1.10px;background:#ececec;"></div>
<div style="position:absolute;left:112.40px;top:391.48px;width:397.10px;height:1.10px;background:#ffb4cf;"></div>
<div style="position:absolute;left:509.50px;top:391.48px;width:158.50px;height:1.10px;background:#ececec;"></div>
<div style="position:absolute;left:112.40px;top:405.85px;width:397.10px;height:1.10px;background:#ffb4cf;"></div>
<div style="position:absolute;left:509.50px;top:405.85px;width:158.50px;height:1.10px;background:#ececec;"></div>
<div style="position:absolute;left:112.40px;top:420.23px;width:397.10px;height:1.10px;background:#ffb4cf;"></div>
<div style="position:absolute;left:509.50px;top:420.23px;width:158.50px;height:1.10px;background:#ececec;"></div>
<div style="position:absolute;left:112.40px;top:434.60px;width:397.10px;height:1.10px;background:#ffb4cf;"></div>
<div style="position:absolute;left:509.50px;top:434.60px;width:158.50px;height:1.10px;background:#ececec;"></div>
<div style="position:absolute;left:112.40px;top:448.98px;width:397.10px;height:1.10px;background:#ffb4cf;"></div>
<div style="position:absolute;left:509.50px;top:448.98px;width:158.50px;height:1.10px;background:#ececec;"></div>
<div style="position:absolute;left:112.40px;top:463.35px;width:397.10px;height:1.10px;background:#f4f4f4;"></div>
<div style="position:absolute;left:509.50px;top:463.35px;width:158.50px;height:1.10px;background:#ececec;"></div>
<div style="position:absolute;left:351.05px;top:119.45px;width:78.40px;height:13.28px;background:#e9bccd;"></div>
<div style="position:absolute;left:352.25px;top:123.00px;font-size:8.5px;line-height:1;color:#161616;white-space:nowrap;transform-origin:0 0;transform:scaleX(0.9344);-webkit-text-stroke:0.170px currentColor;">BELLOTTI A.</div>
<div style="position:absolute;left:271.75px;top:248.82px;width:78.20px;height:13.28px;background:#e9bccd;"></div>
<div style="position:absolute;left:272.95px;top:252.00px;font-size:8.5px;line-height:1;color:#161616;white-space:nowrap;transform-origin:0 0;transform:scaleX(0.9344);-webkit-text-stroke:0.170px currentColor;">BELLOTTI A.</div>
<div style="position:absolute;left:271.75px;top:363.83px;width:78.20px;height:13.28px;background:#e9bccd;"></div>
<div style="position:absolute;left:272.95px;top:367.00px;font-size:8.5px;line-height:1;color:#161616;white-space:nowrap;transform-origin:0 0;transform:scaleX(0.9344);-webkit-text-stroke:0.170px currentColor;">BELLOTTI A.</div>
<div style="position:absolute;left:271.75px;top:406.95px;width:78.20px;height:13.28px;background:#e9bccd;"></div>
<div style="position:absolute;left:272.95px;top:410.00px;font-size:8.5px;line-height:1;color:#161616;white-space:nowrap;transform-origin:0 0;transform:scaleX(0.9344);-webkit-text-stroke:0.170px currentColor;">BELLOTTI A.</div>
<div style="position:absolute;left:668.00px;top:108.30px;width:11.90px;height:366.70px;background:#f0f0f0;border-left:1.4px solid #fff;border-top:0.8px solid #fff;"></div>
<svg style="position:absolute;left:668;top:108" width="12" height="367" viewBox="668 108 12 367"><path d="M672.6 115.2 L675 112.8 L677.4 115.2" fill="none" stroke="#303030" stroke-width="1.2"/><path d="M672.6 468.5 L675 470.9 L677.4 468.5" fill="none" stroke="#303030" stroke-width="1.2"/><rect x="670" y="356" width="9.5" height="10" fill="#cdcdcd"/></svg>
<div style="position:absolute;left:680.00px;top:97.00px;width:2.20px;height:520.00px;background:#ffff00;"></div>
<div style="position:absolute;left:87.00px;top:474.80px;width:593.00px;height:1.80px;background:#ffff00;"></div>
<div style="position:absolute;left:87.00px;top:476.60px;width:593.00px;height:11.40px;background:#a6c8f0;"></div>
<div style="position:absolute;left:332.00px;top:481.00px;font-size:6.8px;line-height:1;color:#000;white-space:nowrap;transform-origin:0 0;transform:scaleX(0.9968);-webkit-text-stroke:0.102px currentColor;">Candidati prenotabili nelle agende</div>
<div style="position:absolute;left:87.00px;top:488.00px;width:593.00px;height:116.00px;background:#fff4cf;"></div>
<div style="position:absolute;left:86.20px;top:476.60px;width:1.20px;height:140.00px;background:#c4c4c4;"></div>
<div style="position:absolute;left:88.80px;top:489.60px;width:39.40px;height:15.00px;background:#000;"></div>
<div style="position:absolute;left:106.00px;top:495.00px;font-size:6.8px;line-height:1;color:#d8e020;white-space:nowrap;transform-origin:0 0;transform:scaleX(0.9539);-webkit-text-stroke:0.000px currentColor;">5</div>
<div style="position:absolute;left:128.20px;top:489.60px;width:551.40px;height:15.80px;background:#444;"></div>
<div style="position:absolute;left:129.90px;top:489.6px;width:93.10px;height:15px;overflow:hidden;"><div style="position:absolute;left:0;top:0;width:100%;height:11.2px;background:#ffcc00;"></div><div style="position:absolute;left:0;top:11.2px;width:100%;height:3.2px;background:#f2f2f2;"></div><div style="position:absolute;left:3px;top:13px;width:87.10px;height:0;border-top:1px dashed #b8b8b8;"></div></div>
<div style="position:absolute;left:129.90px;top:489.6px;width:93.10px;height:15px;overflow:hidden;"><div style="position:absolute;left:28.20px;top:4.00px;font-size:6.9px;line-height:1;color:#141000;white-space:nowrap;transform-origin:0 0;transform:scaleX(0.8856);-webkit-text-stroke:0.138px currentColor;">Nome</div></div>
<svg style="position:absolute;left:0;top:0;overflow:visible" width="1" height="1"><path d="M133.20 501.8 h3.6 l-1.8 2.1 z" fill="#111"/><path d="M216.80 501.8 h3.6 l-1.8 2.1 z" fill="#111"/></svg>
<svg style="position:absolute;left:0;top:0;overflow:visible" width="1" height="1"><circle cx="209.40" cy="493.4" r="2.1" fill="none" stroke="#1a1a1a" stroke-width="1.1"/><line x1="208.00" y1="495.0" x2="206.40" y2="497.4" stroke="#1a1a1a" stroke-width="1.2"/><path d="M213.40 492.4 h5 l-1.6 -1.6 M218.40 494.6 h-5 l1.6 1.6" fill="none" stroke="#fff" stroke-width="1.6"/><path d="M213.40 492.4 h5 l-1.6 -1.6 M218.40 494.6 h-5 l1.6 1.6" fill="none" stroke="#2a2a2a" stroke-width="0.7"/></svg>
<div style="position:absolute;left:223.90px;top:489.6px;width:114.50px;height:15px;overflow:hidden;"><div style="position:absolute;left:0;top:0;width:100%;height:11.2px;background:#ffcc00;"></div><div style="position:absolute;left:0;top:11.2px;width:100%;height:3.2px;background:#f2f2f2;"></div><div style="position:absolute;left:3px;top:13px;width:108.50px;height:0;border-top:1px dashed #b8b8b8;"></div></div>
<div style="position:absolute;left:223.90px;top:489.6px;width:114.50px;height:15px;overflow:hidden;"><div style="position:absolute;left:19.85px;top:4.00px;font-size:6.9px;line-height:1;color:#141000;white-space:nowrap;transform-origin:0 0;transform:scaleX(0.9819);-webkit-text-stroke:0.138px currentColor;">Stato della pratica</div></div>
<svg style="position:absolute;left:0;top:0;overflow:visible" width="1" height="1"><path d="M227.20 501.8 h3.6 l-1.8 2.1 z" fill="#111"/><path d="M332.20 501.8 h3.6 l-1.8 2.1 z" fill="#111"/></svg>
<svg style="position:absolute;left:0;top:0;overflow:visible" width="1" height="1"><circle cx="324.80" cy="493.4" r="2.1" fill="none" stroke="#1a1a1a" stroke-width="1.1"/><line x1="323.40" y1="495.0" x2="321.80" y2="497.4" stroke="#1a1a1a" stroke-width="1.2"/><path d="M328.80 492.4 h5 l-1.6 -1.6 M333.80 494.6 h-5 l1.6 1.6" fill="none" stroke="#fff" stroke-width="1.6"/><path d="M328.80 492.4 h5 l-1.6 -1.6 M333.80 494.6 h-5 l1.6 1.6" fill="none" stroke="#2a2a2a" stroke-width="0.7"/></svg>
<div style="position:absolute;left:339.30px;top:489.6px;width:76.70px;height:15px;overflow:hidden;"><div style="position:absolute;left:0;top:0;width:100%;height:11.2px;background:#ffcc00;"></div><div style="position:absolute;left:0;top:11.2px;width:100%;height:3.2px;background:#f2f2f2;"></div><div style="position:absolute;left:3px;top:13px;width:70.70px;height:0;border-top:1px dashed #b8b8b8;"></div></div>
<div style="position:absolute;left:339.30px;top:489.6px;width:76.70px;height:15px;overflow:hidden;"><div style="position:absolute;left:2.45px;top:4.00px;font-size:6.9px;line-height:1;color:#141000;white-space:nowrap;transform-origin:0 0;transform:scaleX(0.9728);-webkit-text-stroke:0.138px currentColor;">Scadenza statino</div></div>
<svg style="position:absolute;left:0;top:0;overflow:visible" width="1" height="1"><path d="M342.60 501.8 h3.6 l-1.8 2.1 z" fill="#111"/><path d="M409.80 501.8 h3.6 l-1.8 2.1 z" fill="#111"/></svg>
<svg style="position:absolute;left:0;top:0;overflow:visible" width="1" height="1"><circle cx="402.40" cy="493.4" r="2.1" fill="none" stroke="#1a1a1a" stroke-width="1.1"/><line x1="401.00" y1="495.0" x2="399.40" y2="497.4" stroke="#1a1a1a" stroke-width="1.2"/><path d="M406.40 492.4 h5 l-1.6 -1.6 M411.40 494.6 h-5 l1.6 1.6" fill="none" stroke="#fff" stroke-width="1.6"/><path d="M406.40 492.4 h5 l-1.6 -1.6 M411.40 494.6 h-5 l1.6 1.6" fill="none" stroke="#2a2a2a" stroke-width="0.7"/></svg>
<div style="position:absolute;left:416.90px;top:489.6px;width:89.30px;height:15px;overflow:hidden;"><div style="position:absolute;left:0;top:0;width:100%;height:11.2px;background:#ffcc00;"></div><div style="position:absolute;left:0;top:11.2px;width:100%;height:3.2px;background:#f2f2f2;"></div><div style="position:absolute;left:3px;top:13px;width:83.30px;height:0;border-top:1px dashed #b8b8b8;"></div></div>
<div style="position:absolute;left:416.90px;top:489.6px;width:89.30px;height:15px;overflow:hidden;"><div style="position:absolute;left:1.85px;top:4.00px;font-size:6.9px;line-height:1;color:#141000;white-space:nowrap;transform-origin:0 0;transform:scaleX(0.9512);-webkit-text-stroke:0.138px currentColor;">Giorni all'esame guida</div></div>
<svg style="position:absolute;left:0;top:0;overflow:visible" width="1" height="1"><path d="M420.20 501.8 h3.6 l-1.8 2.1 z" fill="#111"/><path d="M500.00 501.8 h3.6 l-1.8 2.1 z" fill="#111"/></svg>
<svg style="position:absolute;left:0;top:0;overflow:visible" width="1" height="1"><circle cx="492.60" cy="493.4" r="2.1" fill="none" stroke="#1a1a1a" stroke-width="1.1"/><line x1="491.20" y1="495.0" x2="489.60" y2="497.4" stroke="#1a1a1a" stroke-width="1.2"/><path d="M496.60 492.4 h5 l-1.6 -1.6 M501.60 494.6 h-5 l1.6 1.6" fill="none" stroke="#fff" stroke-width="1.6"/><path d="M496.60 492.4 h5 l-1.6 -1.6 M501.60 494.6 h-5 l1.6 1.6" fill="none" stroke="#2a2a2a" stroke-width="0.7"/></svg>
<div style="position:absolute;left:507.10px;top:489.6px;width:84.40px;height:15px;overflow:hidden;"><div style="position:absolute;left:0;top:0;width:100%;height:11.2px;background:#ffcc00;"></div><div style="position:absolute;left:0;top:11.2px;width:100%;height:3.2px;background:#f2f2f2;"></div><div style="position:absolute;left:3px;top:13px;width:78.40px;height:0;border-top:1px dashed #b8b8b8;"></div></div>
<div style="position:absolute;left:507.10px;top:489.6px;width:84.40px;height:15px;overflow:hidden;"><div style="position:absolute;left:2.65px;top:4.00px;font-size:6.9px;line-height:1;color:#141000;white-space:nowrap;transform-origin:0 0;transform:scaleX(0.9515);-webkit-text-stroke:0.138px currentColor;">Giorni alla scadenza</div></div>
<svg style="position:absolute;left:0;top:0;overflow:visible" width="1" height="1"><path d="M510.40 501.8 h3.6 l-1.8 2.1 z" fill="#111"/><path d="M585.30 501.8 h3.6 l-1.8 2.1 z" fill="#111"/></svg>
<svg style="position:absolute;left:0;top:0;overflow:visible" width="1" height="1"><circle cx="577.90" cy="493.4" r="2.1" fill="none" stroke="#1a1a1a" stroke-width="1.1"/><line x1="576.50" y1="495.0" x2="574.90" y2="497.4" stroke="#1a1a1a" stroke-width="1.2"/><path d="M581.90 492.4 h5 l-1.6 -1.6 M586.90 494.6 h-5 l1.6 1.6" fill="none" stroke="#fff" stroke-width="1.6"/><path d="M581.90 492.4 h5 l-1.6 -1.6 M586.90 494.6 h-5 l1.6 1.6" fill="none" stroke="#2a2a2a" stroke-width="0.7"/></svg>
<div style="position:absolute;left:592.40px;top:489.6px;width:58.60px;height:15px;overflow:hidden;"><div style="position:absolute;left:0;top:0;width:100%;height:11.2px;background:#ffcc00;"></div><div style="position:absolute;left:0;top:11.2px;width:100%;height:3.2px;background:#f2f2f2;"></div><div style="position:absolute;left:3px;top:13px;width:52.60px;height:0;border-top:1px dashed #b8b8b8;"></div></div>
<div style="position:absolute;left:592.40px;top:489.6px;width:58.60px;height:15px;overflow:hidden;"><div style="position:absolute;left:1.35px;top:4.00px;font-size:6.9px;line-height:1;color:#141000;white-space:nowrap;transform-origin:0 0;transform:scaleX(0.9020);-webkit-text-stroke:0.138px currentColor;">Guide fatte</div></div>
<svg style="position:absolute;left:0;top:0;overflow:visible" width="1" height="1"><path d="M595.70 501.8 h3.6 l-1.8 2.1 z" fill="#111"/><path d="M644.80 501.8 h3.6 l-1.8 2.1 z" fill="#111"/></svg>
<svg style="position:absolute;left:0;top:0;overflow:visible" width="1" height="1"><circle cx="637.40" cy="493.4" r="2.1" fill="none" stroke="#1a1a1a" stroke-width="1.1"/><line x1="636.00" y1="495.0" x2="634.40" y2="497.4" stroke="#1a1a1a" stroke-width="1.2"/><path d="M641.40 492.4 h5 l-1.6 -1.6 M646.40 494.6 h-5 l1.6 1.6" fill="none" stroke="#fff" stroke-width="1.6"/><path d="M641.40 492.4 h5 l-1.6 -1.6 M646.40 494.6 h-5 l1.6 1.6" fill="none" stroke="#2a2a2a" stroke-width="0.7"/></svg>
<div style="position:absolute;left:651.90px;top:489.6px;width:27.70px;height:15px;overflow:hidden;"><div style="position:absolute;left:0;top:0;width:100%;height:11.2px;background:#ffcc00;"></div><div style="position:absolute;left:0;top:11.2px;width:100%;height:3.2px;background:#f2f2f2;"></div><div style="position:absolute;left:3px;top:13px;width:21.70px;height:0;border-top:1px dashed #b8b8b8;"></div></div>
<div style="position:absolute;left:651.90px;top:489.6px;width:27.70px;height:15px;overflow:hidden;"><div style="position:absolute;left:0.60px;top:4.00px;font-size:6.9px;line-height:1;color:#141000;white-space:nowrap;transform-origin:0 0;transform:scaleX(1.0063);-webkit-text-stroke:0.138px currentColor;">Guide pre</div></div>
<svg style="position:absolute;left:0;top:0;overflow:visible" width="1" height="1"><path d="M655.20 501.8 h3.6 l-1.8 2.1 z" fill="#111"/></svg>
<div style="position:absolute;left:129.00px;top:505.60px;width:550.60px;height:11.80px;background:#fffbef;"></div>
<div style="position:absolute;left:88.80px;top:505.60px;width:39.40px;height:11.80px;background:#3c3c3c;"></div>
<div style="position:absolute;left:89.20px;top:506.60px;width:38.60px;height:9.80px;background:#ffd966;"></div>
<div style="position:absolute;left:105.70px;top:508.00px;font-size:7.2px;line-height:1;color:#1a1400;white-space:nowrap;transform-origin:0 0;transform:scaleX(0.9500);-webkit-text-stroke:0.216px currentColor;">1</div>
<div style="position:absolute;left:130.00px;top:507.00px;font-size:8.5px;line-height:1;color:#1c1c1c;white-space:nowrap;transform-origin:0 0;transform:scaleX(1.0000);-webkit-text-stroke:0.255px currentColor;">CATERINA</div>
<div style="position:absolute;left:223.50px;top:506.10px;width:114.50px;height:10.80px;background:#ffff00;"></div>
<div style="position:absolute;left:224.50px;top:507.00px;font-size:8.5px;line-height:1;color:#1c1c1c;white-space:nowrap;transform-origin:0 0;transform:scaleX(1.0000);-webkit-text-stroke:0.255px currentColor;">Corso di formazione</div>
<div style="position:absolute;left:500.88px;top:507.00px;font-size:8.5px;line-height:1;color:#1c1c1c;white-space:nowrap;transform-origin:0 0;transform:scaleX(1.0000);-webkit-text-stroke:0.255px currentColor;">0</div>
<div style="position:absolute;left:586.18px;top:507.00px;font-size:8.5px;line-height:1;color:#1c1c1c;white-space:nowrap;transform-origin:0 0;transform:scaleX(1.0000);-webkit-text-stroke:0.255px currentColor;">0</div>
<div style="position:absolute;left:640.94px;top:507.00px;font-size:8.5px;line-height:1;color:#1c1c1c;white-space:nowrap;transform-origin:0 0;transform:scaleX(1.0000);-webkit-text-stroke:0.255px currentColor;">17</div>
<div style="position:absolute;left:129.00px;top:517.40px;width:550.60px;height:11.70px;background:#fcf1d8;"></div>
<div style="position:absolute;left:88.80px;top:517.40px;width:39.40px;height:11.70px;background:#3c3c3c;"></div>
<div style="position:absolute;left:89.20px;top:518.40px;width:38.60px;height:9.70px;background:#ffd966;"></div>
<div style="position:absolute;left:105.70px;top:520.00px;font-size:7.2px;line-height:1;color:#1a1400;white-space:nowrap;transform-origin:0 0;transform:scaleX(0.9500);-webkit-text-stroke:0.216px currentColor;">2</div>
<div style="position:absolute;left:130.00px;top:519.00px;font-size:8.5px;line-height:1;color:#1c1c1c;white-space:nowrap;transform-origin:0 0;transform:scaleX(1.0000);-webkit-text-stroke:0.255px currentColor;">PROVA</div>
<div style="position:absolute;left:224.50px;top:519.00px;font-size:8.5px;line-height:1;color:#1c1c1c;white-space:nowrap;transform-origin:0 0;transform:scaleX(1.0000);-webkit-text-stroke:0.255px currentColor;">Guida (attende esame)</div>
<div style="position:absolute;left:339.75px;top:519.00px;font-size:8.5px;line-height:1;color:#1c1c1c;white-space:nowrap;transform-origin:0 0;transform:scaleX(0.9545);-webkit-text-stroke:0.255px currentColor;">11/03/2019</div>
<div style="position:absolute;left:500.88px;top:519.00px;font-size:8.5px;line-height:1;color:#1c1c1c;white-space:nowrap;transform-origin:0 0;transform:scaleX(1.0000);-webkit-text-stroke:0.255px currentColor;">0</div>
<div style="position:absolute;left:581.44px;top:519.00px;font-size:8.5px;line-height:1;color:#1c1c1c;white-space:nowrap;transform-origin:0 0;transform:scaleX(1.0000);-webkit-text-stroke:0.255px currentColor;">47</div>
<div style="position:absolute;left:645.68px;top:519.00px;font-size:8.5px;line-height:1;color:#1c1c1c;white-space:nowrap;transform-origin:0 0;transform:scaleX(1.0000);-webkit-text-stroke:0.255px currentColor;">0</div>
<div style="position:absolute;left:129.00px;top:529.10px;width:550.60px;height:11.80px;background:#fffbef;"></div>
<div style="position:absolute;left:88.80px;top:529.10px;width:39.40px;height:11.80px;background:#3c3c3c;"></div>
<div style="position:absolute;left:89.20px;top:530.10px;width:38.60px;height:9.80px;background:#ffd966;"></div>
<div style="position:absolute;left:105.70px;top:532.00px;font-size:7.2px;line-height:1;color:#1a1400;white-space:nowrap;transform-origin:0 0;transform:scaleX(0.9500);-webkit-text-stroke:0.216px currentColor;">3</div>
<div style="position:absolute;left:129.50px;top:529.60px;width:93.50px;height:10.80px;background:#000;"></div>
<div style="position:absolute;left:130.00px;top:531.00px;font-size:8.5px;line-height:1;color:#fff;white-space:nowrap;transform-origin:0 0;transform:scaleX(1.0000);-webkit-text-stroke:0.255px currentColor;">ALESSANDRO</div>
<div style="position:absolute;left:224.50px;top:531.00px;font-size:8.5px;line-height:1;color:#1c1c1c;white-space:nowrap;transform-origin:0 0;transform:scaleX(1.0000);-webkit-text-stroke:0.255px currentColor;">Teoria (attende esame)</div>
<div style="position:absolute;left:339.75px;top:531.00px;font-size:8.5px;line-height:1;color:#1c1c1c;white-space:nowrap;transform-origin:0 0;transform:scaleX(0.9402);-webkit-text-stroke:0.255px currentColor;">22/02/2019</div>
<div style="position:absolute;left:500.88px;top:531.00px;font-size:8.5px;line-height:1;color:#1c1c1c;white-space:nowrap;transform-origin:0 0;transform:scaleX(1.0000);-webkit-text-stroke:0.255px currentColor;">0</div>
<div style="position:absolute;left:581.44px;top:531.00px;font-size:8.5px;line-height:1;color:#1c1c1c;white-space:nowrap;transform-origin:0 0;transform:scaleX(1.0000);-webkit-text-stroke:0.255px currentColor;">30</div>
<div style="position:absolute;left:640.94px;top:531.00px;font-size:8.5px;line-height:1;color:#1c1c1c;white-space:nowrap;transform-origin:0 0;transform:scaleX(1.0000);-webkit-text-stroke:0.255px currentColor;">10</div>
<div style="position:absolute;left:129.00px;top:540.90px;width:550.60px;height:11.70px;background:#fcf1d8;"></div>
<div style="position:absolute;left:88.80px;top:540.90px;width:39.40px;height:11.70px;background:#3c3c3c;"></div>
<div style="position:absolute;left:89.20px;top:541.90px;width:38.60px;height:9.70px;background:#ffd966;"></div>
<div style="position:absolute;left:105.70px;top:544.00px;font-size:7.2px;line-height:1;color:#1a1400;white-space:nowrap;transform-origin:0 0;transform:scaleX(0.9500);-webkit-text-stroke:0.216px currentColor;">4</div>
<div style="position:absolute;left:130.00px;top:543.00px;font-size:8.5px;line-height:1;color:#1c1c1c;white-space:nowrap;transform-origin:0 0;transform:scaleX(1.0000);-webkit-text-stroke:0.255px currentColor;">FRANCESCO</div>
<div style="position:absolute;left:224.50px;top:543.00px;font-size:8.5px;line-height:1;color:#1c1c1c;white-space:nowrap;transform-origin:0 0;transform:scaleX(1.0000);-webkit-text-stroke:0.255px currentColor;">Teoria (attende esame)</div>
<div style="position:absolute;left:339.75px;top:543.00px;font-size:8.5px;line-height:1;color:#1c1c1c;white-space:nowrap;transform-origin:0 0;transform:scaleX(0.9402);-webkit-text-stroke:0.255px currentColor;">15/05/2019</div>
<div style="position:absolute;left:500.88px;top:543.00px;font-size:8.5px;line-height:1;color:#1c1c1c;white-space:nowrap;transform-origin:0 0;transform:scaleX(1.0000);-webkit-text-stroke:0.255px currentColor;">0</div>
<div style="position:absolute;left:577.34px;top:543.00px;font-size:8.5px;line-height:1;color:#1c1c1c;white-space:nowrap;transform-origin:0 0;transform:scaleX(1.0000);-webkit-text-stroke:0.255px currentColor;">112</div>
<div style="position:absolute;left:645.68px;top:543.00px;font-size:8.5px;line-height:1;color:#1c1c1c;white-space:nowrap;transform-origin:0 0;transform:scaleX(1.0000);-webkit-text-stroke:0.255px currentColor;">1</div>
<div style="position:absolute;left:129.00px;top:552.60px;width:550.60px;height:11.70px;background:#fffbef;"></div>
<div style="position:absolute;left:88.80px;top:552.60px;width:39.40px;height:11.70px;background:#3c3c3c;"></div>
<div style="position:absolute;left:89.20px;top:553.60px;width:38.60px;height:9.70px;background:#ffd966;"></div>
<div style="position:absolute;left:105.70px;top:555.00px;font-size:7.2px;line-height:1;color:#1a1400;white-space:nowrap;transform-origin:0 0;transform:scaleX(0.9500);-webkit-text-stroke:0.216px currentColor;">5</div>
<div style="position:absolute;left:130.00px;top:554.00px;font-size:8.5px;line-height:1;color:#1c1c1c;white-space:nowrap;transform-origin:0 0;transform:scaleX(1.0000);-webkit-text-stroke:0.255px currentColor;">FEDERICO</div>
<div style="position:absolute;left:224.50px;top:554.00px;font-size:8.5px;line-height:1;color:#1c1c1c;white-space:nowrap;transform-origin:0 0;transform:scaleX(1.0000);-webkit-text-stroke:0.255px currentColor;">Teoria (attende esame)</div>
<div style="position:absolute;left:339.75px;top:554.00px;font-size:8.5px;line-height:1;color:#1c1c1c;white-space:nowrap;transform-origin:0 0;transform:scaleX(0.9402);-webkit-text-stroke:0.255px currentColor;">23/04/2019</div>
<div style="position:absolute;left:500.88px;top:554.00px;font-size:8.5px;line-height:1;color:#1c1c1c;white-space:nowrap;transform-origin:0 0;transform:scaleX(1.0000);-webkit-text-stroke:0.255px currentColor;">0</div>
<div style="position:absolute;left:581.44px;top:554.00px;font-size:8.5px;line-height:1;color:#1c1c1c;white-space:nowrap;transform-origin:0 0;transform:scaleX(1.0000);-webkit-text-stroke:0.255px currentColor;">90</div>
<div style="position:absolute;left:641.58px;top:554.00px;font-size:8.5px;line-height:1;color:#1c1c1c;white-space:nowrap;transform-origin:0 0;transform:scaleX(1.0000);-webkit-text-stroke:0.255px currentColor;">11</div>
<div style="position:absolute;left:222.90px;top:505.40px;width:1.20px;height:58.90px;background:#5a5a5a;"></div>
<div style="position:absolute;left:338.30px;top:505.40px;width:1.20px;height:58.90px;background:#5a5a5a;"></div>
<div style="position:absolute;left:415.90px;top:505.40px;width:1.20px;height:58.90px;background:#5a5a5a;"></div>
<div style="position:absolute;left:506.10px;top:505.40px;width:1.20px;height:58.90px;background:#5a5a5a;"></div>
<div style="position:absolute;left:591.40px;top:505.40px;width:1.20px;height:58.90px;background:#5a5a5a;"></div>
<div style="position:absolute;left:650.90px;top:505.40px;width:1.20px;height:58.90px;background:#5a5a5a;"></div>
<div style="position:absolute;left:87.40px;top:604.00px;width:592.60px;height:10.20px;background:#f0f0f0;"></div>
<div style="position:absolute;left:187.00px;top:605.00px;width:11.00px;height:8.30px;background:#cdcdcd;"></div>
<svg style="position:absolute;left:87;top:604" width="593" height="11" viewBox="87 604 593 11"><path d="M94.4 606.8 L92 609.2 L94.4 611.6" fill="none" stroke="#202020" stroke-width="1.3"/><path d="M672.4 606.8 L674.8 609.2 L672.4 611.6" fill="none" stroke="#202020" stroke-width="1.3"/></svg>
<div style="position:absolute;left:0.00px;top:614.20px;width:800.00px;height:1.40px;background:#e8e8e8;"></div>
<div style="position:absolute;left:0.00px;top:615.60px;width:800.00px;height:1.40px;background:#d2d2d2;"></div>
<div style="position:absolute;left:682.20px;top:97.00px;width:117.80px;height:11.50px;background:#a6c8f0;"></div>
<div style="position:absolute;left:682.20px;top:107.70px;width:117.80px;height:0.90px;background:#8aa8cc;"></div>
<div style="position:absolute;left:713.40px;top:101.00px;font-size:6.8px;line-height:1;color:#000;white-space:nowrap;transform-origin:0 0;transform:scaleX(0.9674);-webkit-text-stroke:0.102px currentColor;">Agende disponibili</div>
<div style="position:absolute;left:682.20px;top:108.60px;width:116.00px;height:230.20px;background:#fff;"></div>
<div style="position:absolute;left:685.00px;top:111.00px;width:6.60px;height:6.60px;background:#fff;border:0.8px solid #a8a8a8;"></div>
<div style="position:absolute;left:694.20px;top:110.70px;width:9.60px;height:5.90px;background:#ff6b9b;"></div>
<div style="position:absolute;left:706.40px;top:111.00px;font-size:7.0px;line-height:1;color:#111;white-space:nowrap;transform-origin:0 0;transform:scaleX(0.9500);-webkit-text-stroke:0.140px currentColor;">Adele</div>
<div style="position:absolute;left:685.00px;top:119.20px;width:6.60px;height:6.60px;background:#fff;border:0.8px solid #a8a8a8;"></div>
<div style="position:absolute;left:694.20px;top:118.90px;width:9.60px;height:5.90px;background:#52ef52;"></div>
<div style="position:absolute;left:706.40px;top:119.00px;font-size:7.0px;line-height:1;color:#111;white-space:nowrap;transform-origin:0 0;transform:scaleX(0.9500);-webkit-text-stroke:0.140px currentColor;">autocarri</div>
<div style="position:absolute;left:685.00px;top:127.40px;width:6.60px;height:6.60px;background:#fff;border:0.8px solid #a8a8a8;"></div>
<div style="position:absolute;left:694.20px;top:127.10px;width:9.60px;height:5.90px;background:#56b4f4;"></div>
<div style="position:absolute;left:706.40px;top:128.00px;font-size:7.0px;line-height:1;color:#111;white-space:nowrap;transform-origin:0 0;transform:scaleX(0.9500);-webkit-text-stroke:0.140px currentColor;">Giovanni</div>
<div style="position:absolute;left:685.00px;top:135.60px;width:6.60px;height:6.60px;background:#fff;border:0.8px solid #a8a8a8;"></div>
<div style="position:absolute;left:694.20px;top:135.30px;width:9.60px;height:5.90px;background:#e57520;"></div>
<div style="position:absolute;left:706.40px;top:136.00px;font-size:7.0px;line-height:1;color:#111;white-space:nowrap;transform-origin:0 0;transform:scaleX(0.9500);-webkit-text-stroke:0.140px currentColor;">Mario</div>
<svg style="position:absolute;left:684;top:109" width="10" height="10" viewBox="684 109 10 10"><path d="M686 113.8 L688 115.8 L691 111.8" fill="none" stroke="#222" stroke-width="0.9"/></svg>
<div style="position:absolute;left:682.20px;top:338.80px;width:117.80px;height:2.40px;background:#ffff00;"></div>
<div style="position:absolute;left:682.20px;top:341.20px;width:117.80px;height:11.00px;background:#a6c8f0;"></div>
<div style="position:absolute;left:719.70px;top:345.00px;font-size:6.8px;line-height:1;color:#000;white-space:nowrap;transform-origin:0 0;transform:scaleX(0.9824);-webkit-text-stroke:0.102px currentColor;">Pagella guida</div>
<div style="position:absolute;left:682.20px;top:352.20px;width:115.50px;height:261.00px;background:#fff;"></div>
<div style="position:absolute;left:686.75px;top:358.00px;font-size:7.0px;line-height:1;color:#222;white-space:nowrap;transform-origin:0 0;transform:scaleX(0.9815);-webkit-text-stroke:0.000px currentColor;">Prova</div>
<div style="position:absolute;left:737.70px;top:358.00px;font-size:7.0px;line-height:1;color:#222;white-space:nowrap;transform-origin:0 0;transform:scaleX(0.9300);-webkit-text-stroke:0.000px currentColor;">Voto</div>
<div style="position:absolute;left:769.20px;top:358.00px;font-size:7.0px;line-height:1;color:#222;white-space:nowrap;transform-origin:0 0;transform:scaleX(0.9300);-webkit-text-stroke:0.000px currentColor;">Note</div>
<div style="position:absolute;left:734.30px;top:354.00px;width:0.90px;height:259.00px;background:#efefef;"></div>
<div style="position:absolute;left:765.80px;top:354.00px;width:0.90px;height:259.00px;background:#efefef;"></div>
<div style="position:absolute;left:683.00px;top:378.40px;width:114.70px;height:0.90px;background:#f0f0f0;"></div>
<div style="position:absolute;left:683.00px;top:389.20px;width:114.70px;height:0.90px;background:#f0f0f0;"></div>
<div style="position:absolute;left:683.00px;top:400.00px;width:114.70px;height:0.90px;background:#f0f0f0;"></div>
<div style="position:absolute;left:683.00px;top:410.80px;width:114.70px;height:0.90px;background:#f0f0f0;"></div>
<div style="position:absolute;left:683.00px;top:421.60px;width:114.70px;height:0.90px;background:#f0f0f0;"></div>
<div style="position:absolute;left:683.00px;top:432.40px;width:114.70px;height:0.90px;background:#f0f0f0;"></div>
<div style="position:absolute;left:683.00px;top:443.20px;width:114.70px;height:0.90px;background:#f0f0f0;"></div>
<div style="position:absolute;left:683.00px;top:454.00px;width:114.70px;height:0.90px;background:#f0f0f0;"></div>
<div style="position:absolute;left:683.00px;top:464.80px;width:114.70px;height:0.90px;background:#f0f0f0;"></div>
<div style="position:absolute;left:683.00px;top:475.60px;width:114.70px;height:0.90px;background:#f0f0f0;"></div>
<div style="position:absolute;left:683.00px;top:486.40px;width:114.70px;height:0.90px;background:#f0f0f0;"></div>
<div style="position:absolute;left:683.00px;top:497.20px;width:114.70px;height:0.90px;background:#f0f0f0;"></div>
<div style="position:absolute;left:683.00px;top:508.00px;width:114.70px;height:0.90px;background:#f0f0f0;"></div>
<div style="position:absolute;left:683.00px;top:518.80px;width:114.70px;height:0.90px;background:#f0f0f0;"></div>
<div style="position:absolute;left:683.00px;top:529.60px;width:114.70px;height:0.90px;background:#f0f0f0;"></div>
<div style="position:absolute;left:683.00px;top:540.40px;width:114.70px;height:0.90px;background:#f0f0f0;"></div>
<div style="position:absolute;left:683.00px;top:551.20px;width:114.70px;height:0.90px;background:#f0f0f0;"></div>
<div style="position:absolute;left:683.00px;top:562.00px;width:114.70px;height:0.90px;background:#f0f0f0;"></div>
<div style="position:absolute;left:683.00px;top:572.80px;width:114.70px;height:0.90px;background:#f0f0f0;"></div>
<div style="position:absolute;left:683.00px;top:583.60px;width:114.70px;height:0.90px;background:#f0f0f0;"></div>
<div style="position:absolute;left:683.00px;top:594.40px;width:114.70px;height:0.90px;background:#f0f0f0;"></div>
<div style="position:absolute;left:683.00px;top:605.20px;width:114.70px;height:0.90px;background:#f0f0f0;"></div>
<div style="position:absolute;left:797.70px;top:97.00px;width:1.20px;height:517.00px;background:#a0a0a0;"></div>
<div style="position:absolute;left:798.90px;top:97.00px;width:1.10px;height:520.00px;background:#f0f0f0;"></div>
</div></body></html>
